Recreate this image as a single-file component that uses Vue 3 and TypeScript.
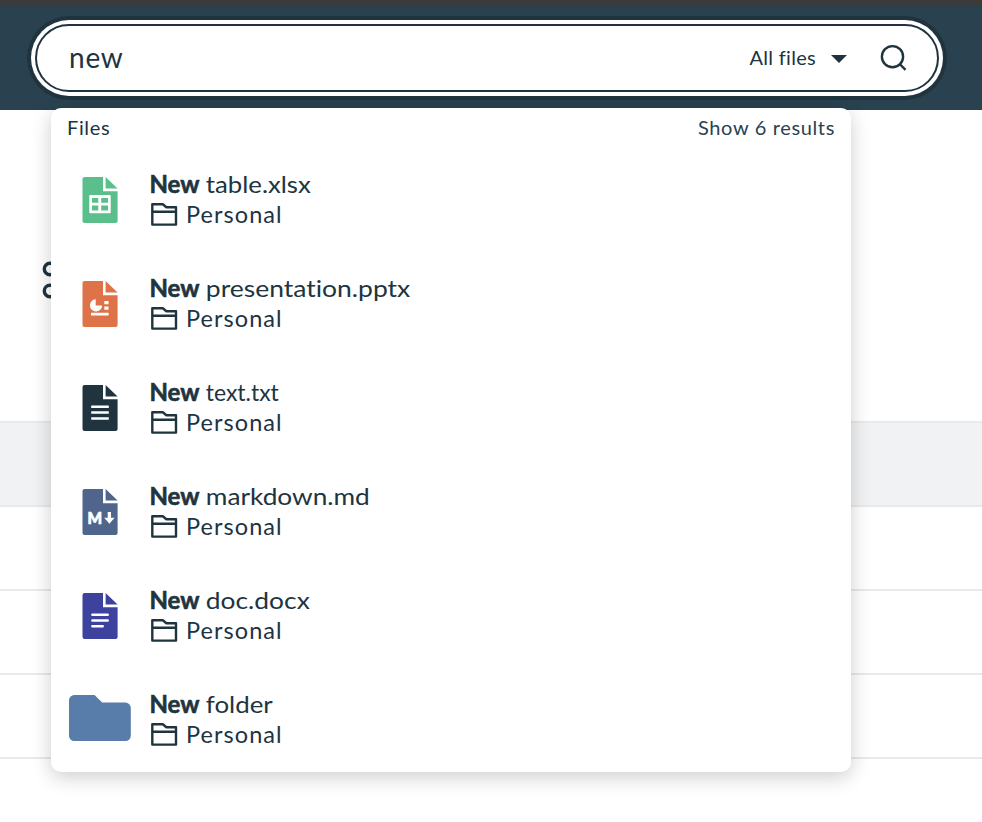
<script setup lang="ts">
import { ref } from 'vue'

type Kind = 'sheet' | 'slides' | 'text' | 'markdown' | 'doc' | 'folder'

interface Result {
  kind: Kind
  rest: string
  width: number
  location: string
}

const query = ref('new')

const colors: Record<Kind, string> = {
  sheet: '#5bbf8c',
  slides: '#de7349',
  text: '#20343f',
  markdown: '#50658c',
  doc: '#3c429d',
  folder: '#587dab',
}

const results: Result[] = [
  { kind: 'sheet', rest: 'table.xlsx', width: 105, location: 'Personal' },
  { kind: 'slides', rest: 'presentation.pptx', width: 204.5, location: 'Personal' },
  { kind: 'text', rest: 'text.txt', width: 73, location: 'Personal' },
  { kind: 'markdown', rest: 'markdown.md', width: 164, location: 'Personal' },
  { kind: 'doc', rest: 'doc.docx', width: 104, location: 'Personal' },
  { kind: 'folder', rest: 'folder', width: 67, location: 'Personal' },
]
</script>

<template>
  <div class="page">
    <header class="topbar">
      <div class="search">
        <input v-model="query" class="query" type="text" aria-label="Search" />
        <button class="scope" type="button">
          <span>All files</span>
          <svg class="caret" width="16" height="8" viewBox="0 0 16 8"><path d="M0 0H16L8 8Z" fill="#20343f" /></svg>
        </button>
        <svg class="lens" width="30" height="30" viewBox="0 0 30 30" fill="none" stroke="#20343f" stroke-width="2.4">
          <circle cx="14.5" cy="13.7" r="10.6" />
          <path d="M21.7 21L27.5 26.8" />
        </svg>
      </div>
    </header>

    <main class="content">
      <div class="tools">
        <svg width="32" height="40" viewBox="0 0 32 40" fill="none" stroke="#20343f" stroke-width="3.4">
          <circle cx="8" cy="8" r="5.7" /><circle cx="8" cy="30" r="5.7" />
        </svg>
      </div>
      <div class="row head"></div>
      <div class="row"></div>
      <div class="row"></div>
      <div class="row"></div>
    </main>

    <section class="dropdown">
      <div class="summary">
        <span class="label">Files</span>
        <a class="more">Show 6 results</a>
      </div>
      <ul class="results">
        <li v-for="item in results" :key="item.rest" class="result">
          <div class="thumb">
            <svg v-if="item.kind === 'folder'" class="folder" width="62" height="46" viewBox="0 0 62 46">
              <path d="M5.5 0H25.5L33.2 7.6H56.5A5.3 5.3 0 0 1 61.8 13V40.5A5.4 5.4 0 0 1 56.4 46H5.4A5.3 5.3 0 0 1 0 40.6V5.5A5.4 5.4 0 0 1 5.5 0Z" :fill="colors.folder" />
            </svg>
            <svg v-else width="36" height="46" viewBox="0 0 36 46">
              <path d="M2.6 0H21V14.3H35.6V44A2 2 0 0 1 33.6 46H2.6A2.1 2.1 0 0 1 .5 43.9V2.1A2.1 2.1 0 0 1 2.6 0Z" :fill="colors[item.kind]" />
              <path d="M23.6 0L35.6 11.6H23.6Z" :fill="colors[item.kind]" />
              <g v-if="item.kind === 'sheet'">
                <path fill="#fff" fill-rule="evenodd" d="M8.3 18H27.7A1 1 0 0 1 28.7 19V35.3A1 1 0 0 1 27.7 36.3H8.3A1 1 0 0 1 7.3 35.3V19A1 1 0 0 1 8.3 18ZM10 20.9V25.8H16.3V20.9ZM19.2 20.9V25.8H26V20.9ZM10 28.6V33.5H16.3V28.6ZM19.2 28.6V33.5H26V28.6Z" />
              </g>
              <g v-else-if="item.kind === 'slides'" fill="#fff">
                <path d="M13.7 18.2V24.4H20.1A6.1 6.1 0 1 1 13.7 18.2Z" />
                <path d="M22.3 20H26.5V23.2H22.3ZM22.3 25.5H26.5V28.7H22.3Z" />
                <rect x="9" y="31.8" width="17.6" height="2.8" rx=".5" />
              </g>
              <g v-else-if="item.kind === 'markdown'" fill="#fff">
                <text class="mark" x="5.6" y="34.5" textLength="14.6" lengthAdjust="spacingAndGlyphs">M</text>
                <path d="M25.7 23H29V28.8H32.6L27.4 34.7L22.2 28.8H25.7Z" />
              </g>
              <g v-else stroke="#fff" stroke-width="2.5" :stroke-linecap="item.kind === 'doc' ? 'round' : 'butt'">
                <path v-if="item.kind === 'text'" d="M9.2 21.7H26.8M9.2 27.6H26.8M9.2 33.5H26.8" />
                <path v-else d="M10.4 21.7H25.7M10.4 27.4H25.7M10.4 33.2H20.7" />
              </g>
            </svg>
          </div>
          <div class="info">
            <svg class="line" width="300" height="30">
              <text class="name strong" x="-0.5" y="22.5" textLength="50" lengthAdjust="spacingAndGlyphs">New</text>
              <text class="name" x="55.8" y="22.5" :textLength="item.width" lengthAdjust="spacingAndGlyphs">{{ item.rest }}</text>
            </svg>
            <div class="place">
              <svg width="28" height="24" viewBox="0 0 28 24" fill="none" stroke="#20343f" stroke-width="2.4" stroke-linejoin="round">
                <path d="M2.3 1.3H12.8L16.4 4.2H26V21.6H2.3ZM2.3 8.8H26" />
              </svg>
              <span>{{ item.location }}</span>
            </div>
          </div>
        </li>
      </ul>
    </section>
  </div>
</template>

<style>
body {
  margin: 0;
  overflow: hidden;
}
</style>

<style scoped>
.page {
  position: relative;
  width: 982px;
  height: 822px;
  overflow: hidden;
  background: #fff;
  color: #20343f;
  font-family: Lato, sans-serif;
  font-variant-ligatures: none;
}
.topbar {
  box-sizing: border-box;
  height: 110px;
  padding: 18px 43px 0 35px;
  border-top: 6px solid #3c3b3b;
  background: #2a424f;
}
.search {
  box-sizing: border-box;
  display: flex;
  align-items: center;
  height: 68px;
  padding: 0 29px 0 32px;
  border: 2px solid #20343f;
  border-radius: 34px;
  background: #fff;
  box-shadow: 0 0 0 4px #fff, 0 0 0 8px #20343f;
}
.query {
  flex: 1;
  min-width: 0;
  padding: 0 0 2px;
  border: 0;
  outline: 0;
  background: transparent;
  color: #20343f;
  font: 28px Lato, sans-serif;
  letter-spacing: 0.8px;
}
.scope {
  display: flex;
  align-items: center;
  gap: 15px;
  padding: 0;
  border: 0;
  background: transparent;
  color: #20343f;
  font: 20px Lato, sans-serif;
  letter-spacing: 0.3px;
}
.scope span {
  padding-bottom: 2px;
}
.caret {
  margin-top: 2px;
}
.lens {
  margin-left: 31px;
}
.content {
  display: flex;
  flex-direction: column;
}
.tools {
  box-sizing: border-box;
  height: 311px;
  padding: 151px 0 0 42px;
}
.row {
  box-sizing: border-box;
  height: 84px;
  border-bottom: 2px solid #e9e9ea;
}
.head {
  height: 86px;
  border-top: 2px solid #e9eaeb;
  background: #f0f2f4;
}
.dropdown {
  position: absolute;
  top: 108px;
  left: 51px;
  width: 800px;
  height: 664px;
  border-radius: 10px;
  background: #fff;
  box-shadow: 0 5px 20px rgba(0, 0, 0, 0.2);
}
.summary {
  box-sizing: border-box;
  display: flex;
  justify-content: space-between;
  align-items: center;
  height: 40px;
  padding: 0 16px 2px;
  font-size: 20px;
  letter-spacing: 0.65px;
}
.more {
  color: #2a424f;
}
.results {
  margin: 0;
  padding: 0;
  list-style: none;
}
.result {
  display: flex;
  align-items: center;
  height: 104px;
}
.thumb {
  display: flex;
  justify-content: center;
  width: 98px;
}
.thumb svg {
  display: block;
}
.thumb .folder {
  margin: 0 1px 5px 0;
}
.info {
  display: flex;
  flex-direction: column;
  padding-left: 1px;
}
.line {
  display: block;
  overflow: visible;
}
.name {
  fill: #20343f;
  font-size: 24px;
}
.strong {
  font-weight: 700;
  stroke: #20343f;
  stroke-width: 0.6px;
}
.mark {
  font: 900 16px Lato, sans-serif;
  stroke: #fff;
  stroke-width: 0.7px;
}
.place {
  display: flex;
  align-items: center;
  gap: 8px;
  height: 30px;
  font-size: 23.5px;
  letter-spacing: 1.05px;
}
.place span {
  padding-bottom: 2px;
}
</style>
